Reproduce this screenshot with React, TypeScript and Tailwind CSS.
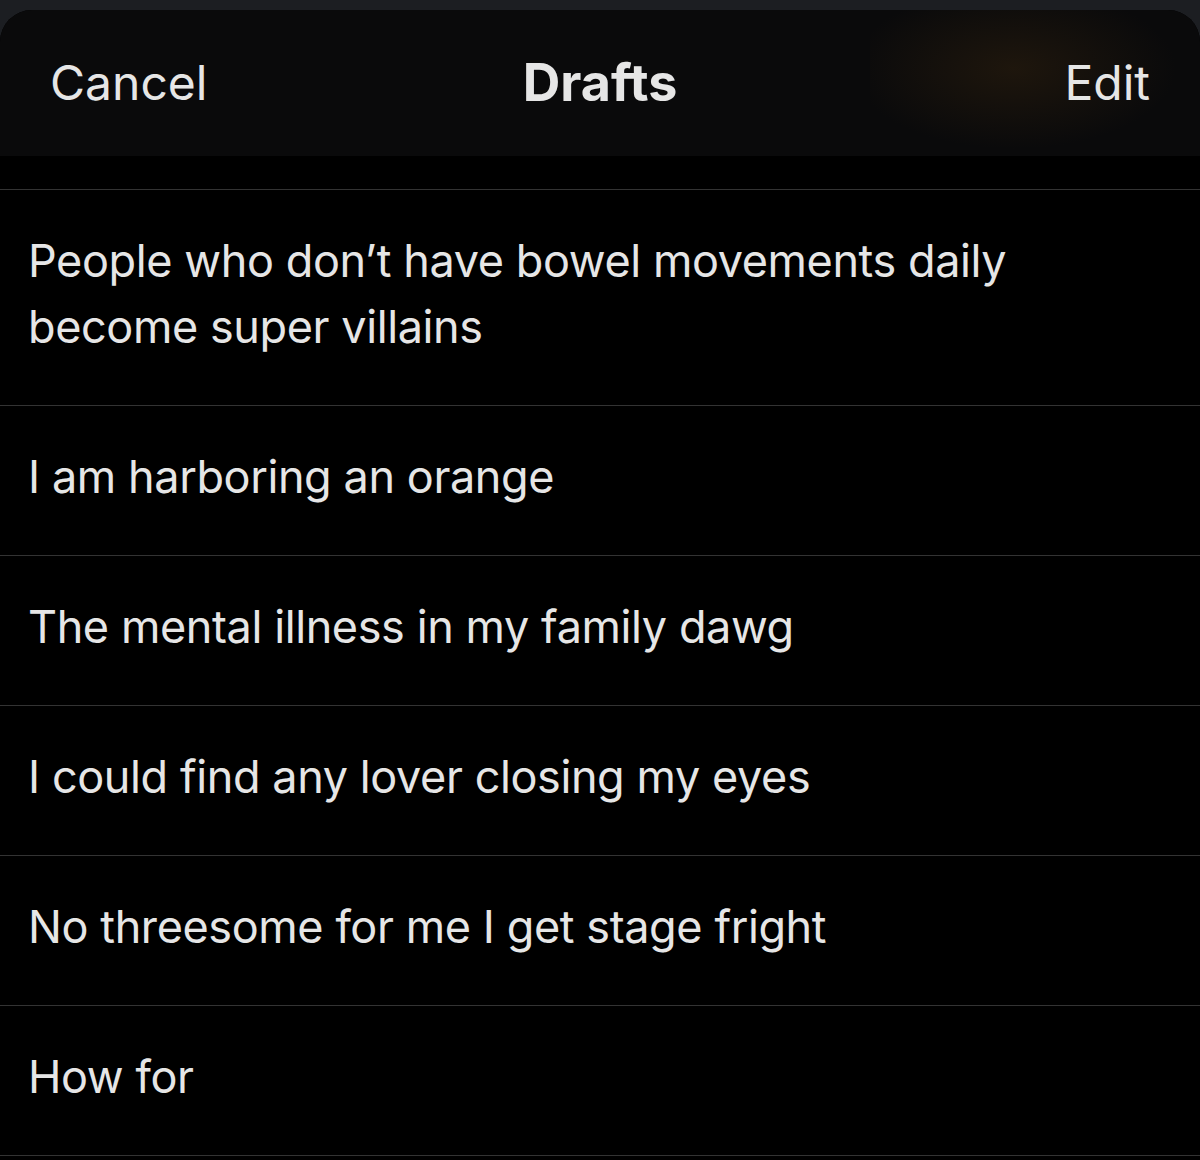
const drafts = [
  'People who don\u2019t have bowel movements daily become super villains',
  'I am harboring an orange',
  'The mental illness in my family dawg',
  'I could find any lover closing my eyes',
  'No threesome for me I get stage fright',
  'How for',
];

export default function App() {
  return (
    <div className="w-[1200px] h-[1160px] overflow-hidden bg-[#1c1e22] pt-[10px] font-['Inter','Noto_Sans',sans-serif] text-[#e6e6e6]">
      <div className="h-full bg-black rounded-t-[32px] overflow-hidden">
        <header className="relative h-[146px] bg-[#0a0a0b] flex items-center justify-between px-[50px]">
          <div className="absolute right-[10px] top-0 w-[320px] h-[146px] bg-[radial-gradient(ellipse_at_45%_40%,rgba(60,40,15,0.4),transparent_65%)]" />
          <span className="relative text-[48px]">Cancel</span>
          <span className="absolute left-0 right-0 text-center text-[52px] font-bold">Drafts</span>
          <span className="relative text-[48px]">Edit</span>
        </header>
        <ul className="mt-[33px] border-t border-[#333]">
          {drafts.map((d) => (
            <li key={d} className="border-b border-[#333] px-[28px] pt-[38px] pb-[45px] text-[45px] leading-[66px] tracking-[-0.4px]">
              <p className="max-w-[1030px]">{d}</p>
            </li>
          ))}
        </ul>
      </div>
    </div>
  );
}
